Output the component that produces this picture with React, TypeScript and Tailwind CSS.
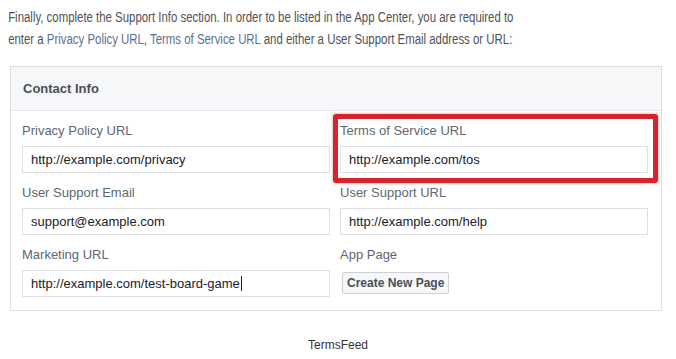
import React from "react";

type Field = {
  label: string;
  value?: string;
  caret?: boolean;
  button?: string;
  highlight?: boolean;
};

const leftFields: Field[] = [
  { label: "Privacy Policy URL", value: "http://example.com/privacy" },
  { label: "User Support Email", value: "support@example.com" },
  { label: "Marketing URL", value: "http://example.com/test-board-game", caret: true },
];

const rightFields: Field[] = [
  { label: "Terms of Service URL", value: "http://example.com/tos", highlight: true },
  { label: "User Support URL", value: "http://example.com/help" },
  { label: "App Page", button: "Create New Page" },
];

function FormField({ field }: { field: Field }) {
  return (
    <div className="relative flex flex-col">
      {field.highlight && (
        <div className="pointer-events-none absolute -top-[9px] -bottom-[10px] -left-[7px] -right-[10px] rounded-[3px] border-[5px] border-[#d3252b] shadow-[0_0_3px_rgba(160,20,20,0.5)]" />
      )}
      <label className="h-4 text-[13px] leading-4 text-[#606770]">{field.label}</label>
      {field.button ? (
        <div className="mt-[7px] pl-[2px]">
          <button className="h-[22px] rounded-[2px] border border-[#ced0d4] bg-[#f6f7f9] px-[4px] text-[12px] font-bold text-[#4b4f56]">
            {field.button}
          </button>
        </div>
      ) : (
        <div className="mt-[7px] flex h-[27px] items-center border border-[#dddfe2] bg-white pl-2 text-[13px] text-[#1d2129]">
          {field.value}
          {field.caret && <span className="ml-px inline-block h-[15px] w-px bg-[#1d2129]" />}
        </div>
      )}
    </div>
  );
}

export default function App() {
  return (
    <div className="min-h-[359px] w-[676px] bg-white font-['Liberation_Sans',Arial,sans-serif]">
      <p className="origin-left scale-x-[0.815] whitespace-nowrap pl-[10px] pt-[6px] text-[14px] leading-[22px] text-[#4f5257]">
        Finally, complete the Support Info section. In order to be listed in the App Center, you are required to
        <br />
        enter a <span className="text-[#5a7094]">Privacy Policy URL</span>,{" "}
        <span className="text-[#5a7094]">Terms of Service URL</span> and either a User Support Email address or URL:
      </p>

      <div className="ml-[10px] mt-4 w-[652px] border border-[#dddfe2] bg-white">
        <div className="flex h-[44px] items-center border-b border-[#e5e6e9] bg-[#f6f7f9] px-3 text-[13px] font-bold text-[#4b4f56]">
          Contact Info
        </div>
        <div className="grid grid-cols-2 gap-x-[10px] pl-[11px] pr-[13px] pb-[13px] pt-3">
          <div className="flex flex-col gap-3">
            {leftFields.map((f) => (
              <FormField key={f.label} field={f} />
            ))}
          </div>
          <div className="flex flex-col gap-3">
            {rightFields.map((f) => (
              <FormField key={f.label} field={f} />
            ))}
          </div>
        </div>
      </div>

      <div className="mt-[25px] text-center text-[12px] text-[#333]">TermsFeed</div>
    </div>
  );
}
